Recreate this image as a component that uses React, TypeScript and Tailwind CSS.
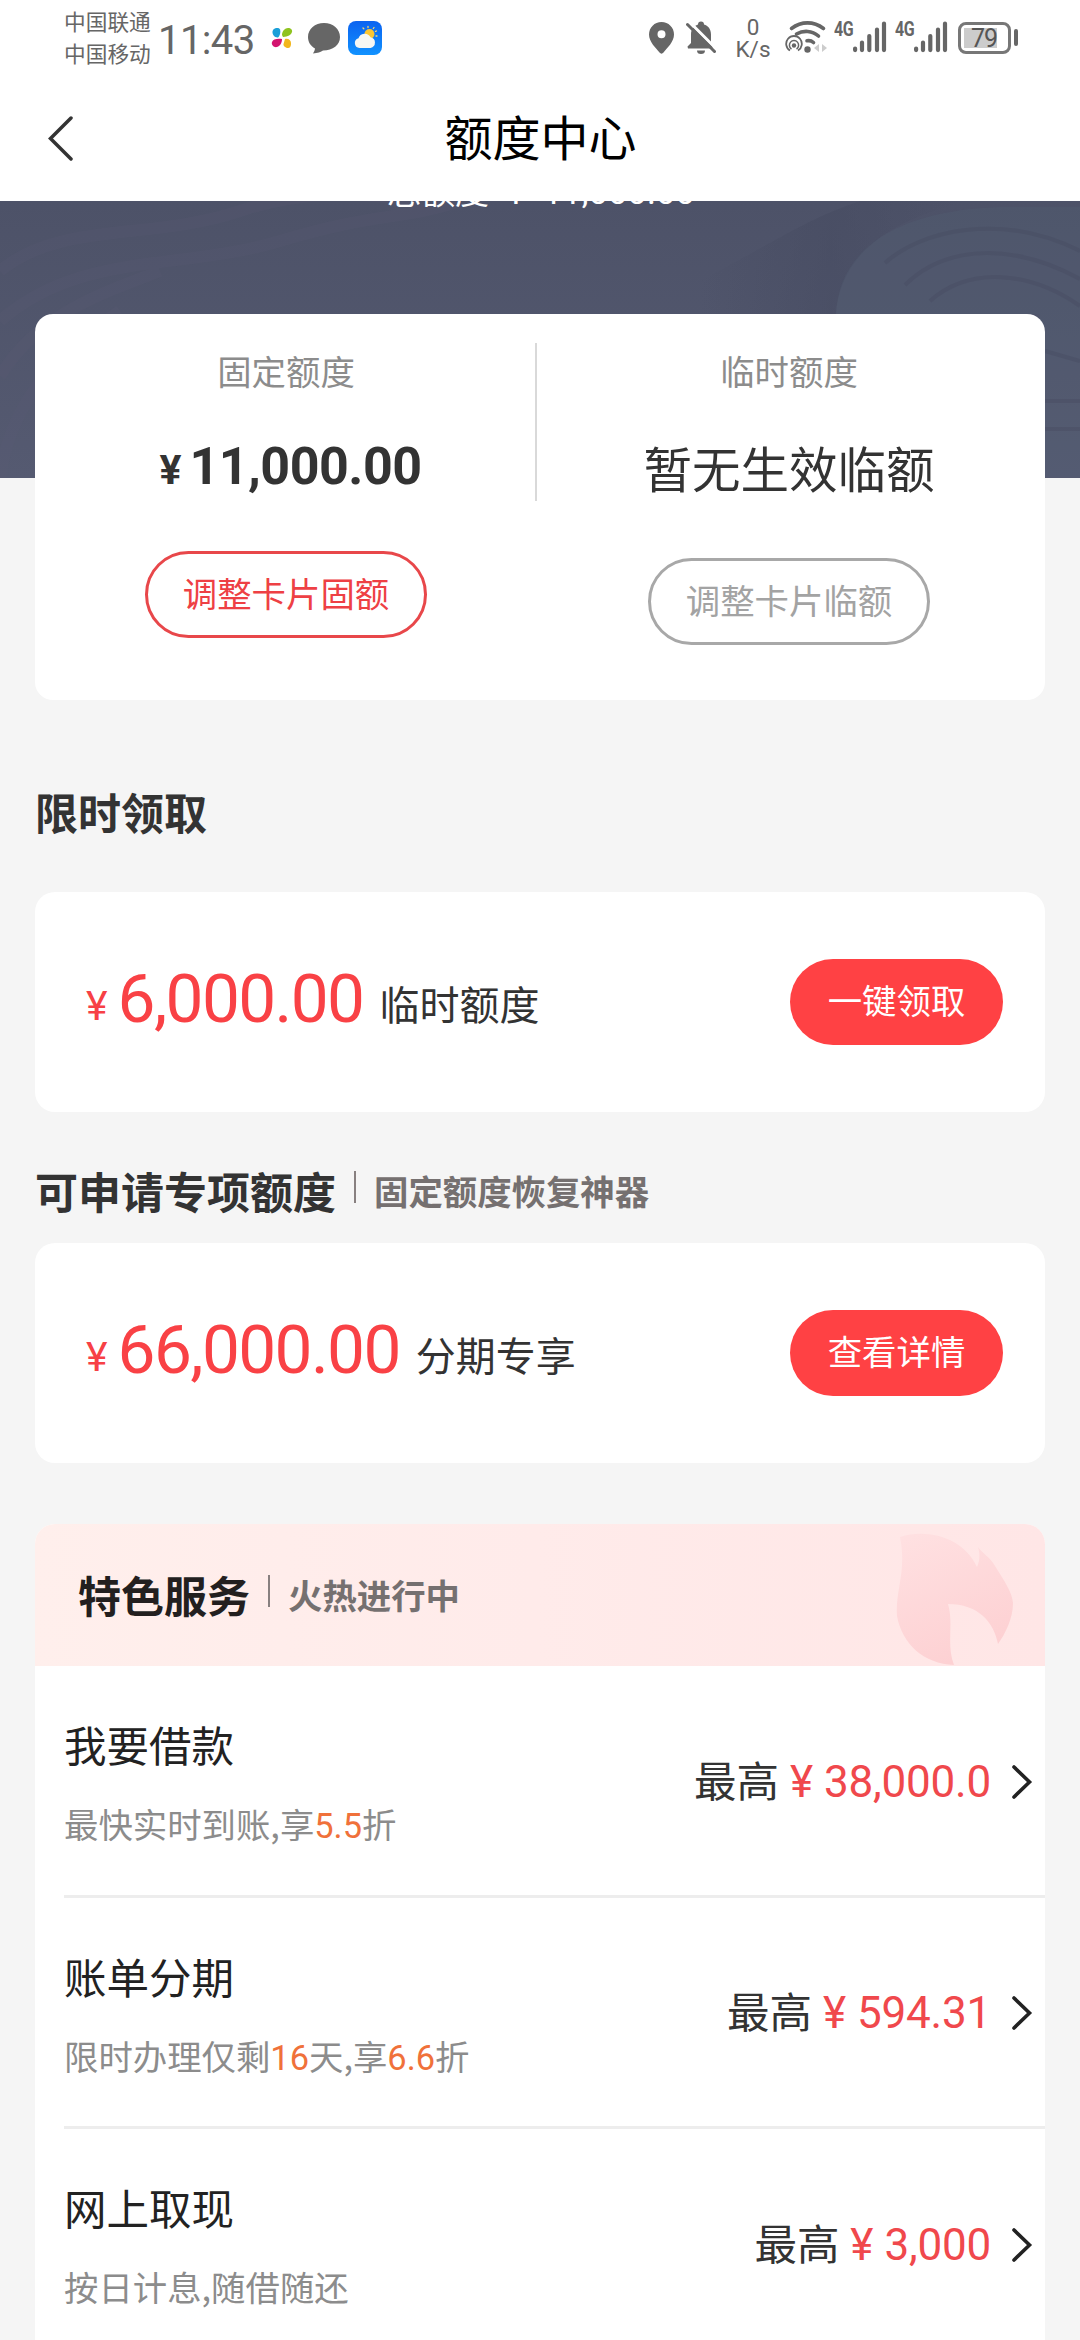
import React from 'react';
import clsx from 'clsx';

type Service = {
  title: string;
  desc: { text: string; hot?: boolean }[];
  amount: string;
};

const services: Service[] = [
  {
    title: '我要借款',
    desc: [{ text: '最快实时到账,享' }, { text: '5.5', hot: true }, { text: '折' }],
    amount: '38,000.0',
  },
  {
    title: '账单分期',
    desc: [
      { text: '限时办理仅剩' },
      { text: '16', hot: true },
      { text: '天,享' },
      { text: '6.6', hot: true },
      { text: '折' },
    ],
    amount: '594.31',
  },
  {
    title: '网上取现',
    desc: [{ text: '按日计息,随借随还' }],
    amount: '3,000',
  },
];

function Signal() {
  return (
    <div className="flex items-start">
      <span className="w-[19px] origin-left scale-x-[0.8] font-['Roboto'] text-[20px] leading-[17px] font-bold tracking-[-0.5px] text-[#666]">
        4G
      </span>
      <svg className="h-8 w-[34px]" viewBox="0 0 34 32" stroke="#666" strokeWidth="4.2" strokeLinecap="round">
        <path d="M2.1 27.5v1.6M9 21.5v7.6M16.3 15v14.1M24 8.5v20.6M31 2.5v26.6" />
      </svg>
    </div>
  );
}

function StatusBar() {
  return (
    <div className="flex h-[77px] items-start pl-[64px]">
      <div className="w-[94px] pt-[5px] text-[21.7px] leading-[32px] text-[#666]">
        <div>中国联通</div>
        <div>中国移动</div>
      </div>
      <div className="w-[113px] pt-[21px] font-['Roboto'] text-[40px] leading-[40px] tracking-[-0.6px] text-[#666]">
        11:43
      </div>
      <svg className="mt-[27px] h-[22px] w-[22px]" viewBox="0 0 22 22">
        <path d="M2 3C4 .5 8 .5 9 2.5c1 3-.5 7-2 8C4 11 0 7 2 3z" fill="#1b9fd8" />
        <path d="M11 8c0-4 3-7 6-7 3 0 4.500 2 4 4-.8 3-4 4.500-9 5z" fill="#8fc31f" />
        <path d="M1 15c1-3 5-3.500 10-3 0 4-2 7-5 8-3 .8-6-2-5-5z" fill="#d3146f" />
        <path d="M14 12c3-1 6 1 6 4 .3 3-1 5-3 5s-5-2-4.500-4z" fill="#f2b61c" />
      </svg>
      <svg className="mt-[23px] ml-[15px] h-[31px] w-[32px]" viewBox="0 0 32 31" fill="#666">
        <path d="M16 0C7 0 0 6 0 14c0 5 2.500 9 7 11.500-.3 2-1 3.500-2 5 4.500-.3 8-1.500 10-3C25 27.500 32 22 32 14S25 0 16 0z" />
      </svg>
      <svg className="mt-[21px] ml-[8px] h-[34px] w-[34px]" viewBox="0 0 34 34">
        <defs>
          <linearGradient id="sky" x1="0" y1="0" x2="0" y2="1">
            <stop offset="0" stopColor="#0b63f0" />
            <stop offset="1" stopColor="#1192ff" />
          </linearGradient>
        </defs>
        <rect width="34" height="34" rx="8" fill="url(#sky)" />
        <circle cx="21.500" cy="13" r="5" fill="#fcc630" />
        <path
          d="M20 5.500v1M15 7l.8.8M26 6.500l-.7 1M28.500 10l-1 .4M29 15h-1"
          stroke="#fcd76a"
          strokeWidth="1.300"
          strokeLinecap="round"
        />
        <path
          d="M11.500 27a5 5 0 0 1-1-9.800 6.500 6.500 0 0 1 12-1 5.500 5.500 0 0 1 0 10.800z"
          fill="#f6f7f3"
        />
      </svg>

      <svg className="mt-[22px] ml-[267px] h-[32px] w-[25px]" viewBox="0 0 25 32">
        <path
          d="M12.500 0C5.500 0 0 5.500 0 12.500 0 20 7 26 10.500 30.500c1.200 1.500 2.800 1.500 4 0C18 26 25 20 25 12.500 25 5.500 19.500 0 12.500 0zm0 8.200a4 4 0 0 1 0 8 4 4 0 0 1 0-8z"
          fill="#666"
          fillRule="evenodd"
        />
      </svg>
      <svg className="mt-[21px] ml-[12px] h-[33px] w-[30px]" viewBox="0 0 30 33">
        <path
          d="M2 27.500h23.500L27 26l-2-3v-9.500C25 8 22 4.500 18 3.500a3 3 0 0 0-6 0C7.500 5 5 8.500 5 13.500v8.500L1.500 25.500zM11 29.500h8a4 3.500 0 0 1-8 0z"
          fill="#666"
        />
        <path d="M3 .5L31 28.500" stroke="#fff" strokeWidth="3" />
        <path d="M1.500 3.500L28.500 30.500" stroke="#666" strokeWidth="3" strokeLinecap="round" />
      </svg>
      <div className="mt-[16px] ml-[18px] w-[38px] text-center font-['Roboto'] text-[22.5px] leading-[22px] text-[#666]">
        <div>0</div>
        <div>K/s</div>
      </div>
      <svg className="mt-[21px] ml-[13px] h-[33px] w-[42px]" viewBox="0 0 42 33" fill="none" stroke="#666">
        <path d="M6.500 7.500c10-7.500 22-7.500 32 0" strokeWidth="3.600" strokeLinecap="round" />
        <path d="M11.500 13c7-4 15.500-3.500 22 2" strokeWidth="3.600" strokeLinecap="round" />
        <path d="M22 19.800c2.500-.5 4.500 0 6.500 1.700" strokeWidth="3.600" strokeLinecap="round" />
        <circle cx="22.500" cy="28.500" r="3.200" fill="#666" stroke="none" />
        <circle cx="9" cy="24.500" r="2.200" fill="#666" stroke="none" />
        <path d="M5 30a7.800 7.800 0 1 1 8 0" strokeWidth="1.800" transform="translate(0 -.5)" />
        <path d="M6.500 28a4.600 4.600 0 1 1 5 0" strokeWidth="1.500" />
        <path d="M34 23v8l-5-4zM37 23v8l5-4z" fill="#ccc" stroke="none" />
      </svg>
      <div className="mt-[21px] ml-[7px] flex gap-[8px]">
        <Signal />
        <Signal />
      </div>
      <div className="mt-[22px] ml-[10px] flex h-[32px] w-[53px] rounded-[8px] border-[3px] border-[#777] p-[3px]">
        <div className="flex h-full w-[33px] items-center justify-end bg-[#ccc] font-['Roboto'] text-[25px] leading-none tracking-[-1px] text-[#555]">
          79
        </div>
      </div>
      <div className="mt-[29px] ml-[3px] h-[17px] w-[4px] rounded-[2px] bg-[#666]" />
    </div>
  );
}

function NavBar() {
  return (
    <div className="flex h-[124px] items-start">
      <svg className="mt-[38px] ml-[47px] h-[46px] w-[27px]" viewBox="0 0 27 46" fill="none" stroke="#333" strokeWidth="3.500">
        <path d="M24 3L3.500 23.500 24 44" strokeLinecap="round" />
      </svg>
      <h1 className="mt-[34px] flex-1 pr-[73px] text-center text-[48px] leading-[48px] text-black">额度中心</h1>
    </div>
  );
}

function Banner() {
  return (
    <div className="relative h-[277px] overflow-hidden bg-linear-to-b from-[#4d5268] to-[#555a71]">
      <svg className="absolute inset-0 h-full w-full" viewBox="0 0 1080 277" fill="none">
        <defs>
          <linearGradient id="fold" gradientUnits="userSpaceOnUse" x1="700" y1="0" x2="960" y2="0">
            <stop offset="0" stopColor="#454a60" stopOpacity="0" />
            <stop offset="0.5" stopColor="#454a60" stopOpacity="0.5" />
            <stop offset="1" stopColor="#454a60" stopOpacity="0" />
          </linearGradient>
        </defs>
        <g stroke="#5c5b75" strokeWidth="12" opacity="0.2">
          <path d="M0 70C60 20 150 40 240 10S400 0 420 0" />
          <path d="M0 120C80 50 180 70 280 40S400 20 460 0" />
          <path d="M0 175C40 110 110 90 160 70" />
          <path d="M0 277C10 200 60 150 120 110" />
        </g>
        <path d="M690 85C760 50 800 20 860 0h110C880 20 840 60 836 113H690z" fill="url(#fold)" />
        <path d="M836 113C838 60 880 10 1000 6h80v270h-40V113z" fill="#545f75" opacity="0.3" />
        <g stroke="#474b61" strokeWidth="4" opacity="0.4">
          <path d="M885 62C920 30 1000 10 1080 50" />
          <path d="M905 84C950 40 1020 45 1080 78" />
          <path d="M930 100C970 65 1030 70 1080 105" />
          <path d="M1045 150l35 10M1045 200h35M1045 228h35" />
        </g>
      </svg>
      <div className="relative mt-[-28px] flex justify-center pl-[2px] text-[34px] leading-[34px] text-white">
        <span>总额度</span>
        <span className="w-[54px] pt-[2px] text-center font-['Roboto']">¥</span>
        <span className="pt-[2px] font-['Roboto'] tracking-[0.3px]">11,000.00</span>
      </div>
    </div>
  );
}

function LimitCard() {
  return (
    <div className="relative mx-[35px] -mt-[164px] flex h-[386px] rounded-[18px] bg-white">
      <div className="flex w-[500px] flex-col items-center pt-[38px] pl-[2px]">
        <div className="text-[34.400px] leading-[36px] text-[#8c8c8c]">固定额度</div>
        <div className="mt-[49px] flex h-[60px] items-baseline pl-[9px] font-['Roboto'] font-bold text-[#333]">
          <span className="text-[41px]">¥</span>
          <span className="ml-[8px] text-[52px] leading-[60px] tracking-[-0.5px]">11,000.00</span>
        </div>
        <button className="mt-[54px] h-[87px] w-[282px] rounded-full border-[3px] border-[#e8474a] pb-[4px] text-[34.400px] leading-none text-[#ee4044]">
          调整卡片固额
        </button>
      </div>
      <div className="mt-[29px] h-[158px] w-[2px] bg-[#d9d9d9]" />
      <div className="flex w-[504px] flex-col items-center pt-[38px]">
        <div className="text-[34.400px] leading-[36px] text-[#8c8c8c]">临时额度</div>
        <div className="mt-[49px] text-[48.500px] leading-[60px] text-[#333]">暂无生效临额</div>
        <button className="mt-[61px] h-[87px] w-[282px] rounded-full border-[3px] border-[#a8a8a8] pb-[4px] text-[34.400px] leading-none text-[#a3a3a3]">
          调整卡片临额
        </button>
      </div>
    </div>
  );
}

function SectionTitle({ title, sub, className }: { title: string; sub?: string; className?: string }) {
  return (
    <div className={clsx('flex items-start', className)}>
      <h2 className="text-[43px] leading-[44px] font-bold">{title}</h2>
      {sub && (
        <>
          <div className="mt-[3px] ml-[18px] h-[32px] w-[2px] bg-[#888080]" />
          <div className="ml-[18px] text-[34.400px] leading-[44px] font-bold text-[#757070]">{sub}</div>
        </>
      )}
    </div>
  );
}

function OfferCard({ amount, label, action }: { amount: string; label: string; action: string }) {
  return (
    <div className="mx-[35px] flex h-[220px] items-center justify-between rounded-[20px] bg-white pr-[42px] pl-[51px]">
      <div className="flex items-baseline">
        <span className="relative top-[-2px] font-['Roboto'] text-[41px] text-[#f74045]">¥</span>
        <span className="ml-[10px] font-['Roboto'] text-[67.500px] leading-none tracking-[-1.600px] text-[#f94145]">
          {amount}
        </span>
        <span className="relative top-[-2px] ml-[16px] text-[40px] leading-none text-[#333]">{label}</span>
      </div>
      <button className="h-[86px] w-[213px] rounded-full bg-[#ff4144] pb-[5px] text-[34.400px] leading-none text-white">
        {action}
      </button>
    </div>
  );
}

function ServiceRow({ item, last }: { item: Service; last: boolean }) {
  return (
    <div className={clsx('ml-[29px] flex h-[231.5px] justify-between', !last && 'border-b-[3px] border-[#ededed]')}>
      <div className="pt-[55px]">
        <div className="text-[42.500px] leading-[46px] text-[#222]">{item.title}</div>
        <div className="mt-[36px] text-[34.400px] leading-[40px] whitespace-nowrap text-[#8c8c8c]">
          {item.desc.map((part) =>
            part.hot ? (
              <span key={part.text} className="font-['Roboto'] text-[#f0713a]">
                {part.text}
              </span>
            ) : (
              <span key={part.text}>{part.text}</span>
            ),
          )}
        </div>
      </div>
      <div className="flex h-[231px] items-center pr-[12px]">
        <span className="mt-[-6px] text-[42.500px] leading-[46px] text-[#333]">最高</span>
        <span className="w-[45px] text-center font-['Roboto'] text-[44px] leading-[46px] text-[#f0484c]">¥</span>
        <span className="font-['Roboto'] text-[44px] leading-[46px] tracking-[-0.200px] text-[#f0484c]">
          {item.amount}
        </span>
        <svg className="ml-[20px] h-[36px] w-[22px]" viewBox="0 0 22 36" fill="none" stroke="#222" strokeWidth="3.600">
          <path d="M3 3l15.500 15L3 33" strokeLinecap="round" />
        </svg>
      </div>
    </div>
  );
}

function ServiceCard() {
  return (
    <div className="mx-[35px] mt-[61px] overflow-hidden rounded-t-[20px] bg-white">
      <div className="flex h-[142px] justify-between bg-linear-to-r from-[#ffefec] via-[#ffebea] to-[#ffe6e6]">
        <SectionTitle title="特色服务" sub="火热进行中" className="pt-[48px] pl-[43px] text-[#231f1f]" />
        <svg className="mr-[32px] h-[142px] w-[117px]" viewBox="0 0 117 142">
          <defs>
            <linearGradient id="flame" x1="0" y1="0" x2="0.4" y2="1">
              <stop offset="0" stopColor="#ffe1e2" />
              <stop offset="1" stopColor="#fdd1d3" />
            </linearGradient>
          </defs>
          <path
            d="M4 13C32 4 68 14 81 43c3-7 3-13 1-20 4 6 12 10 17 19 10 16 17 26 18 37 0 16-8 31-15 41-4-22-20-40-50-40 6 20-2 40 6 61C28 140 6 120 1 92-1 66 11 48 4 13z"
            fill="url(#flame)"
          />
        </svg>
      </div>
      {services.map((item, i) => (
        <ServiceRow key={item.title} item={item} last={i === services.length - 1} />
      ))}
    </div>
  );
}

function App() {
  return (
    <div className="h-[2340px] w-[1080px] overflow-hidden bg-[#f5f5f5] font-['Noto_Sans_CJK_SC',sans-serif]">
      <header className="bg-white">
        <StatusBar />
        <NavBar />
      </header>
      <main>
        <Banner />
        <LimitCard />
        <SectionTitle title="限时领取" className="mt-[89px] mb-[59px] pl-[35px] text-[#333]" />
        <OfferCard amount="6,000.00" label="临时额度" action="一键领取" />
        <SectionTitle title="可申请专项额度" sub="固定额度恢复神器" className="mt-[56px] mb-[31px] pl-[35px] text-[#333]" />
        <OfferCard amount="66,000.00" label="分期专享" action="查看详情" />
        <ServiceCard />
      </main>
    </div>
  );
}

export default App;
